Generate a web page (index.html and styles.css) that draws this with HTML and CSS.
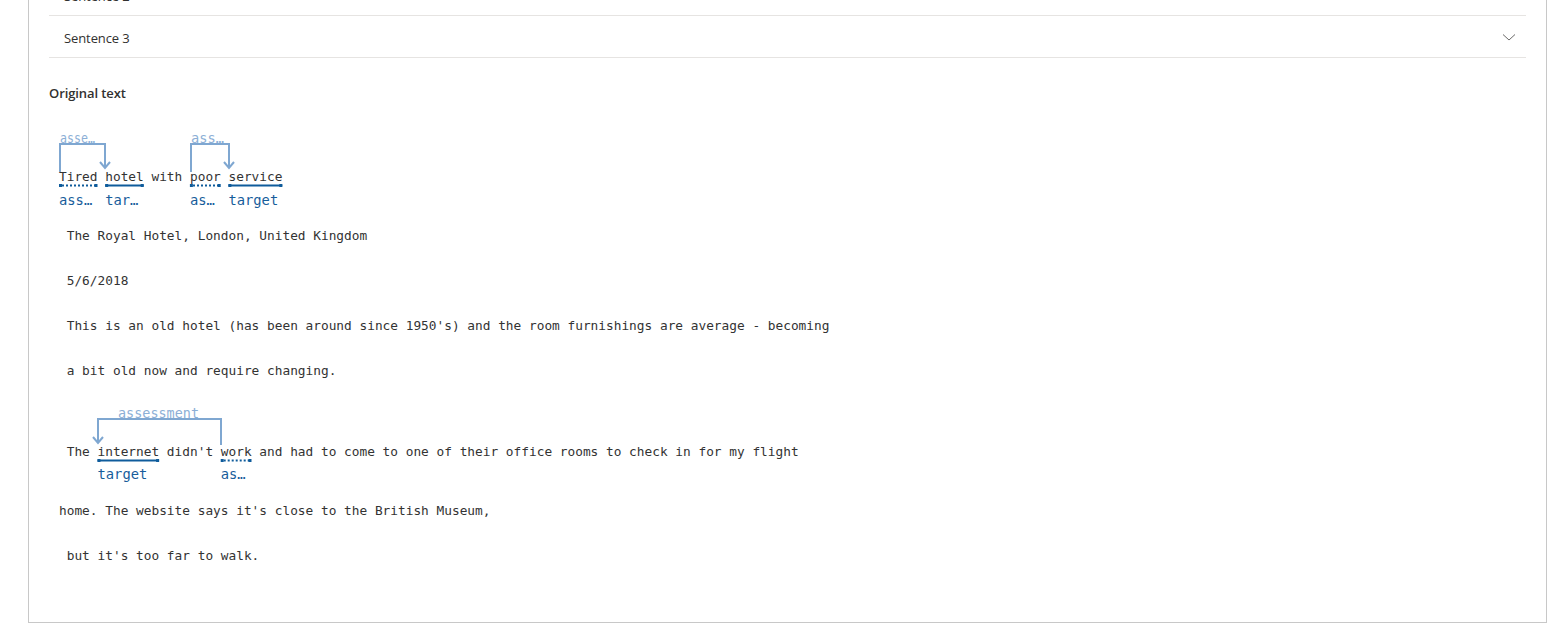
FILE: index.html
```html
<!DOCTYPE html>
<html lang="en">
<head>
<meta charset="utf-8">
<title>Original text</title>
<link rel="stylesheet" href="styles.css">
</head>
<body>
<div class="panel">
  <div class="acc-row"><span class="acc-title">Sentence 2</span>
    <svg class="chev" width="14" height="8" viewBox="0 0 14 8"><path d="M1 1.5 L7 7 L13 1.5" /></svg>
  </div>
  <div class="acc-row"><span class="acc-title">Sentence 3</span>
    <svg class="chev" width="14" height="8" viewBox="0 0 14 8"><path d="M1 1.5 L7 7 L13 1.5" /></svg>
  </div>

  <h3 class="heading">Original text</h3>

  <div class="doc">
    <svg class="ann" width="300" height="95" viewBox="0 0 300 95">
      <g class="arc">
        <path d="M1 54 V26 H46 V49" />
        <path d="M41 44 L46 50 L51 44" />
        <path d="M132 54 V26 H170 V49" />
        <path d="M165 44 L170 50 L175 44" />
      </g>
      <text class="arc-label" x="1" y="25" textLength="35" lengthAdjust="spacingAndGlyphs">asse…</text>
      <text class="arc-label" x="132" y="25" textLength="33" lengthAdjust="spacingAndGlyphs">ass…</text>

      <text class="word" x="0" y="63" xml:space="preserve">Tired hotel with poor service</text>

      <g class="ul">
        <line class="dot" x1="3" y1="67.5" x2="36" y2="67.5" />
        <rect x="0" y="66" width="3" height="3" /><rect x="35.5" y="66" width="3" height="3" />
        <line x1="46.2" y1="67.5" x2="84.7" y2="67.5" />
        <rect x="46.2" y="66" width="3" height="3" /><rect x="81.7" y="66" width="3" height="3" />
        <line class="dot" x1="134" y1="67.5" x2="159" y2="67.5" />
        <rect x="130.9" y="66" width="3" height="3" /><rect x="158.7" y="66" width="3" height="3" />
        <line x1="169.4" y1="67.5" x2="223.3" y2="67.5" />
        <rect x="169.4" y="66" width="3" height="3" /><rect x="220.3" y="66" width="3" height="3" />
      </g>

      <text class="tag" x="0" y="86.5">ass…</text>
      <text class="tag" x="46.2" y="86.5">tar…</text>
      <text class="tag" x="130.9" y="86.5">as…</text>
      <text class="tag" x="169.4" y="86.5">target</text>
    </svg>

    <p class="line"> The Royal Hotel, London, United Kingdom</p>
    <p class="line"> 5/6/2018</p>
    <p class="line"> This is an old hotel (has been around since 1950's) and the room furnishings are average - becoming</p>
    <p class="line"> a bit old now and require changing.</p>

    <svg class="ann" width="800" height="95" viewBox="0 0 800 95">
      <g class="arc">
        <path d="M162 52 V26 H39 V49" />
        <path d="M34 44 L39 50 L44 44" />
      </g>
      <text class="arc-label" x="59" y="25" textLength="81" lengthAdjust="spacingAndGlyphs">assessment</text>

      <text class="word" x="0" y="63" xml:space="preserve"> The internet didn't work and had to come to one of their office rooms to check in for my flight</text>

      <g class="ul">
        <line x1="38.5" y1="67.5" x2="100.1" y2="67.5" />
        <rect x="38.5" y="66" width="3" height="3" /><rect x="97.1" y="66" width="3" height="3" />
        <line class="dot" x1="164.7" y1="67.5" x2="190" y2="67.5" />
        <rect x="161.7" y="66" width="3" height="3" /><rect x="189.5" y="66" width="3" height="3" />
      </g>

      <text class="tag" x="38.5" y="86">target</text>
      <text class="tag" x="161.7" y="86">as…</text>
    </svg>

    <p class="line">home. The website says it's close to the British Museum,</p>
    <p class="line"> but it's too far to walk.</p>
  </div>
</div>
</body>
</html>
```

FILE: styles.css
```css
html, body {
  margin: 0;
  padding: 0;
  background: #ffffff;
}

body {
  font-family: "Open Sans", "Noto Sans", sans-serif;
  color: #323130;
}

.panel {
  margin: -27px 16px 10px 28px;
  border: 1px solid #c8c8c8;
  padding: 0 20px 44px 20px;
}

.acc-row {
  border-bottom: 1px solid #e6e4e2;
  display: flex;
  align-items: center;
  justify-content: space-between;
  padding: 2px 10px 0 15px;
  box-sizing: content-box;
  height: 39px;
}

.acc-title {
  font-size: 13px;
  color: #323130;
  letter-spacing: -0.1px;
}

.chev {
  display: block;
  fill: none;
  stroke: #6b6a69;
  stroke-width: 1;
  margin-top: -2px;
}

.heading {
  margin: 25px 0 15px 0;
  font-size: 13px;
  line-height: 20px;
  font-weight: 600;
  color: #323130;
  letter-spacing: -0.1px;
}

.doc {
  padding-left: 10px;
}

.ann {
  display: block;
  overflow: visible;
}

.ann .word {
  font-family: "DejaVu Sans Mono", "Liberation Mono", monospace;
  font-size: 12.8px;
  fill: #333333;
}

.ann .arc path {
  fill: none;
  stroke: #7fa7d1;
  stroke-width: 2;
}

.ann .arc-label {
  font-family: "DejaVu Sans Mono", "Liberation Mono", monospace;
  font-size: 14px;
  fill: #8cafd6;
}

.ann .ul line {
  stroke: #0f5c9c;
  stroke-width: 2;
}

.ann .ul line.dot {
  stroke-width: 2;
  stroke-dasharray: 2 2;
}

.ann .ul rect {
  fill: #0f5c9c;
}

.ann .tag {
  font-family: "DejaVu Sans Mono", "Liberation Mono", monospace;
  font-size: 13.8px;
  fill: #175d9b;
}

.line {
  margin: 0;
  height: 45px;
  line-height: 45px;
  white-space: pre;
  font-family: "DejaVu Sans Mono", "Liberation Mono", monospace;
  font-size: 12.8px;
  color: #333333;
}
```
